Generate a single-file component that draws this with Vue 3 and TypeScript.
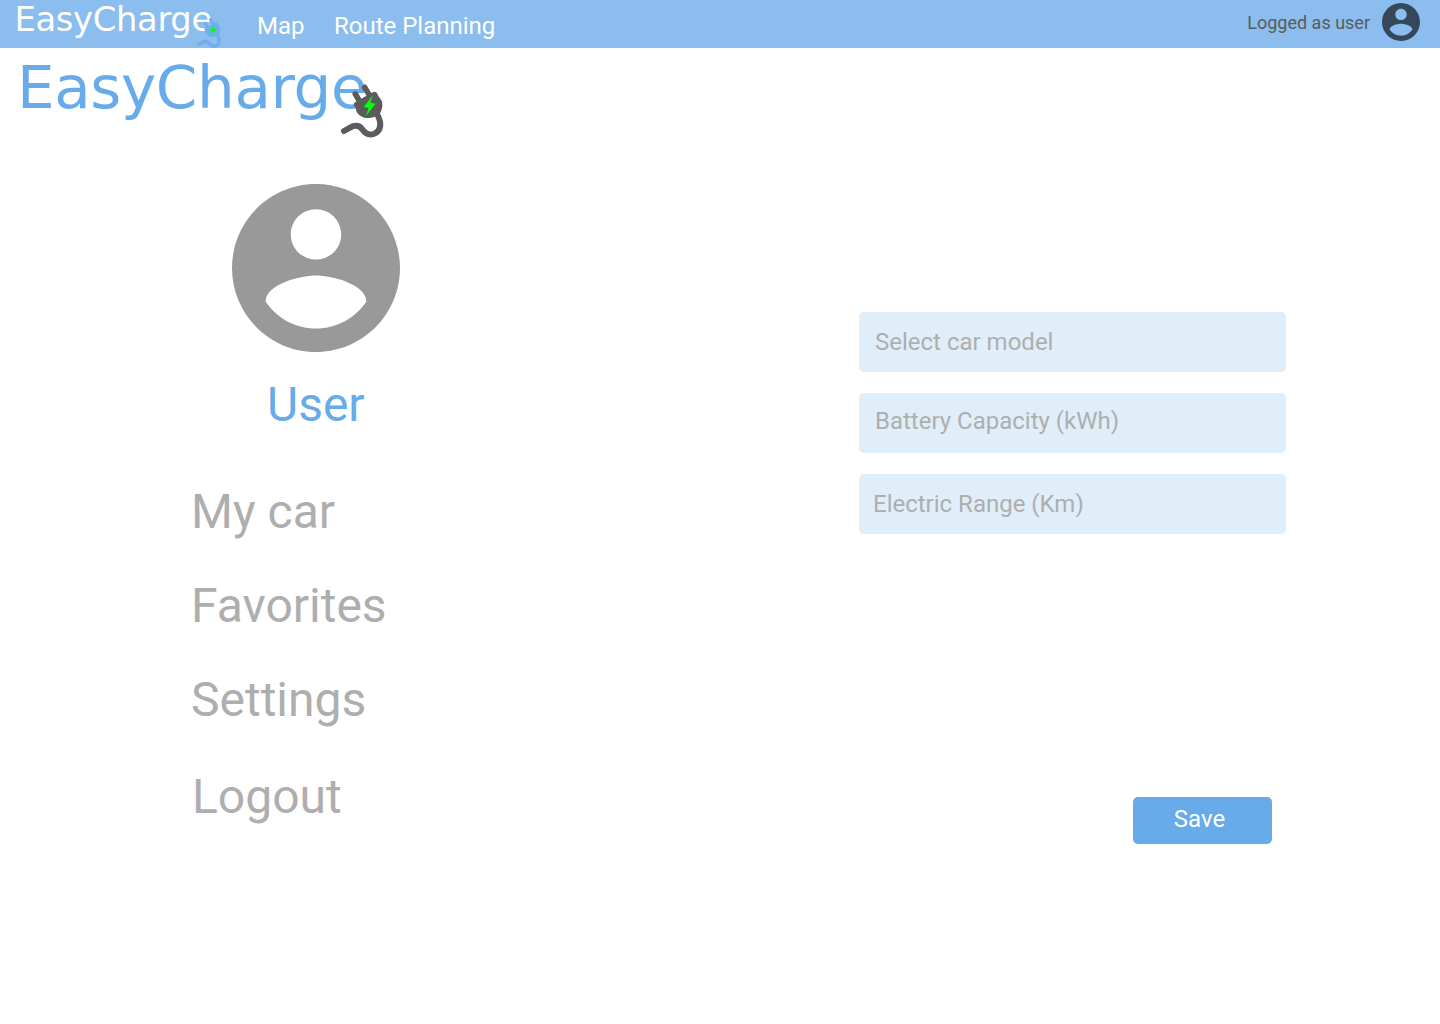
<script setup lang="ts">
interface Entry {
  id: string
  label: string
}

const links: Entry[] = [
  { id: 'map', label: 'Map' },
  { id: 'route', label: 'Route Planning' },
]

const menu: Entry[] = [
  { id: 'car', label: 'My car' },
  { id: 'favorites', label: 'Favorites' },
  { id: 'settings', label: 'Settings' },
  { id: 'logout', label: 'Logout' },
]

const fields: Entry[] = [
  { id: 'model', label: 'Select car model' },
  { id: 'battery', label: 'Battery Capacity (kWh)' },
  { id: 'range', label: 'Electric Range (Km)' },
]

const accountPath =
  'M12 2C6.48 2 2 6.48 2 12s4.48 10 10 10 10-4.48 10-10S17.52 2 12 2zm0 3c1.66 0 3 1.34 3 3s-1.34 3-3 3-3-1.34-3-3 1.34-3 3-3zm0 14.2c-2.5 0-4.71-1.28-6-3.22.03-1.99 4-3.08 6-3.08 1.99 0 5.97 1.09 6 3.08-1.29 1.94-3.5 3.22-6 3.22z'
const bodyPath =
  'M72 107Q69 101 75 97L130 66Q138 63 142 71L145 79Q158 91 157 107Q156 122 149 133Q127 148 103 143Q78 135 77 114Z'
const cablePath = 'M42 183L60 173C75 164 88 166 96 177C106 191 116 197 131 192C152 184 156 162 144 138'
const prongPath = 'M76 72L91 97M104 52L119 77'
const boltPath = 'M129 75L101 111L116 114L107 139L137 101L121 98Z'
</script>

<template>
  <div class="page">
    <header class="bar">
      <div class="logo logo-small">
        <span>EasyCharge</span>
        <svg class="plug" viewBox="0 0 210 240">
          <path class="line" :d="cablePath" />
          <path class="line prong" :d="prongPath" />
          <path class="body" :d="bodyPath" />
          <path class="bolt" :d="boltPath" />
        </svg>
      </div>
      <nav class="links">
        <a v-for="l in links" :key="l.id" :class="l.id">{{ l.label }}</a>
      </nav>
      <div class="session">
        <span>Logged as user</span>
        <svg viewBox="2 2 20 20"><path :d="accountPath" /></svg>
      </div>
    </header>

    <div class="logo logo-big">
      <span>EasyCharge</span>
      <svg class="plug" viewBox="0 0 210 240">
        <path class="line" :d="cablePath" />
        <path class="line prong" :d="prongPath" />
        <path class="body" :d="bodyPath" />
        <path class="bolt" :d="boltPath" />
      </svg>
    </div>

    <main class="content">
      <aside class="profile">
        <svg class="avatar" viewBox="2 2 20 20"><path :d="accountPath" /></svg>
        <h1>User</h1>
        <nav class="menu">
          <a v-for="m in menu" :key="m.id" :class="m.id">{{ m.label }}</a>
        </nav>
      </aside>
      <form class="form" @submit.prevent>
        <div v-for="f in fields" :key="f.id" class="field" :class="f.id">{{ f.label }}</div>
        <button type="submit">Save</button>
      </form>
    </main>
  </div>
</template>

<style>
body {
  margin: 0;
  background: #fff;
}
</style>

<style scoped>
.page {
  width: 1440px;
  height: 1024px;
  overflow: hidden;
  background: #fff;
  font-family: Roboto, sans-serif;
}
.bar {
  display: flex;
  height: 48px;
  background: #8bbdee;
}
.logo {
  position: relative;
  font-family: Verdana, 'DejaVu Sans', sans-serif;
  white-space: nowrap;
  box-sizing: border-box;
}
.logo span {
  display: block;
}
.plug {
  position: absolute;
  display: block;
  fill: none;
}
.line {
  stroke: currentColor;
  stroke-width: 18;
  stroke-linecap: round;
  stroke-linejoin: round;
}
.prong {
  stroke-width: 17;
}
.body {
  fill: currentColor;
}
.bolt {
  fill: #00ff0a;
}
.logo-small {
  width: 257px;
  padding: 0 0 0 14.5px;
  color: #fff;
  font-size: 33.75px;
  line-height: 40px;
  letter-spacing: -0.33px;
}
.logo-small .plug {
  left: 190.7px;
  top: 9.5px;
  width: 39.4px;
  height: 45px;
  color: #70aeec;
}
.logo-big {
  height: 100px;
  padding: 5px 0 0 17px;
  color: #67abea;
  font-size: 59.5px;
  line-height: 69px;
  letter-spacing: -0.35px;
}
.logo-big .plug {
  left: 330px;
  top: 22px;
  width: 70px;
  height: 80px;
  color: #5b5b5b;
}
.links {
  display: flex;
  gap: 29.5px;
  color: #fff;
  font-size: 24px;
  line-height: 28px;
  padding-top: 12px;
}
.session {
  display: flex;
  margin-left: auto;
  padding-right: 20px;
  gap: 12px;
  color: #5b5b5b;
  font-size: 18px;
  line-height: 21px;
}
.session span {
  padding-top: 12px;
}
.session svg {
  width: 38px;
  height: 38px;
  margin-top: 3px;
  fill: #34475b;
}
.content {
  display: flex;
}
.profile {
  width: 859px;
  box-sizing: border-box;
  padding: 36px 0 0 191px;
}
.avatar {
  display: block;
  width: 168px;
  height: 168px;
  margin-left: 41px;
  fill: #999;
}
h1 {
  margin: 25px 0 0 76px;
  color: #67abea;
  font-size: 48px;
  line-height: 56px;
  font-weight: 400;
}
.menu {
  display: flex;
  flex-direction: column;
  gap: 38px;
  margin-top: 51px;
  color: #aeaeae;
  font-size: 48px;
  line-height: 56px;
}
.logout {
  margin: 3px 0 0 1px;
}
.form {
  display: flex;
  flex-direction: column;
  gap: 21px;
  width: 427px;
  padding-top: 164px;
}
.field {
  height: 60px;
  box-sizing: border-box;
  padding: 16px 0 0 16px;
  border-radius: 5px;
  background: #e0eef9;
  color: #aeaeae;
  font-size: 24px;
  line-height: 28px;
}
.field.battery {
  padding-top: 14px;
}
.field.range {
  padding-left: 14px;
}
button {
  align-self: flex-end;
  width: 139px;
  height: 47px;
  margin: 242px 14px 0 0;
  padding: 0 6px 3px 0;
  border: 0;
  border-radius: 5px;
  background: #67abea;
  color: #fff;
  font: 24px/28px Roboto, sans-serif;
}
</style>
